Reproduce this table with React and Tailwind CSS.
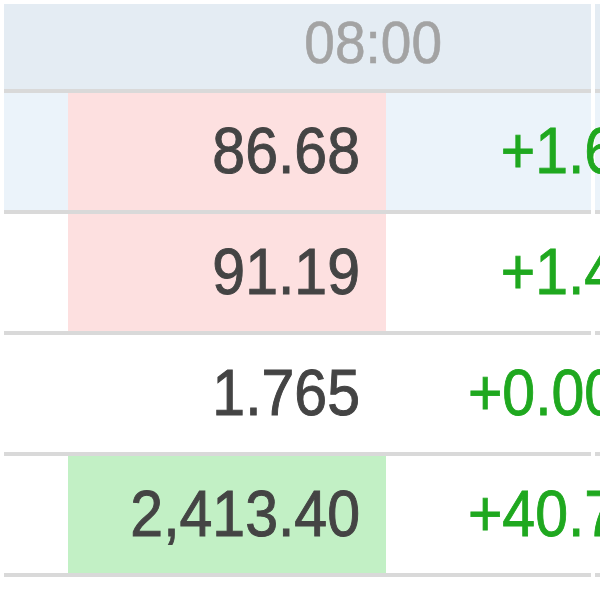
import React from "react";

const rows = [
  { value: "86.68", change: "+1.63", cell: "bg-[#fde0e0]", row: "bg-[#ebf3fa]" },
  { value: "91.19", change: "+1.45", cell: "bg-[#fde0e0]", row: "bg-white" },
  { value: "1.765", change: "+0.004", cell: "", row: "bg-white" },
  { value: "2,413.40", change: "+40.72", cell: "bg-[#c2f0c5]", row: "bg-white" },
];

function App() {
  return (
    <div
      className="relative w-[600px] h-[600px] overflow-hidden bg-white pt-[4px] pl-[4px]"
      style={{ fontFamily: '"Liberation Sans", Arial, sans-serif' }}
    >
      <div className="flex w-[700px] h-[89px] items-center bg-[#e4ecf3] border-b-4 border-[#d9d9d9]">
        <div className="w-[438px] shrink-0 text-right text-[55px] leading-none text-[#a3a3a3] -mt-[6px]">
          <span className="inline-block scale-y-[1.08] [-webkit-text-stroke:0.6px_#a3a3a3]">08:00</span>
        </div>
      </div>
      {rows.map((r, i) => (
        <div
          key={i}
          className={`flex w-[700px] h-[121px] border-b-4 border-[#d9d9d9] ${r.row}`}
        >
          <div className="w-[64px] shrink-0" />
          <div
            className={`w-[318px] shrink-0 flex items-center justify-end pr-[26px] text-[59px] leading-none text-[#444444] ${r.cell}`}
          >
            <span className="inline-block scale-y-[1.1] [-webkit-text-stroke:0.9px_#444444]">{r.value}</span>
          </div>
          <div className="w-[264px] shrink-0 flex items-center justify-end text-[59px] leading-none text-[#1fa81f] relative z-10">
            <span className="inline-block scale-y-[1.1] [-webkit-text-stroke:0.8px_#1fa81f]">{r.change}</span>
          </div>
        </div>
      ))}
      {/* white column divider on the right */}
      <div className="absolute left-[591px] top-0 w-[4px] h-[577px] bg-white" />
    </div>
  );
}

export default App;
